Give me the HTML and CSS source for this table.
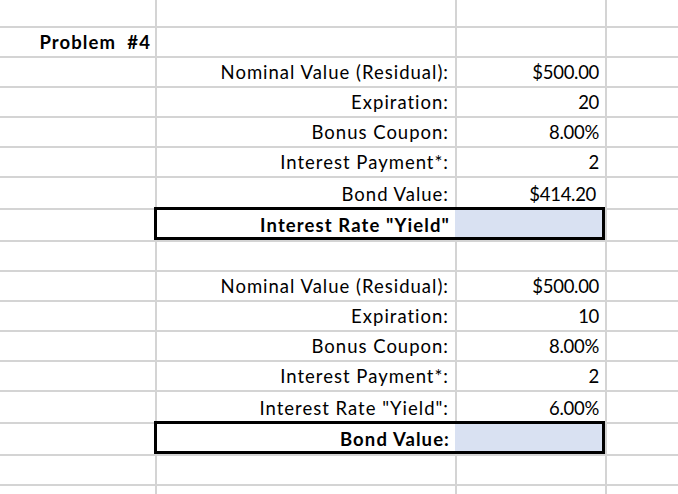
FILE: index.html
```html
<!DOCTYPE html>
<html>
<head>
<meta charset="utf-8">
<link rel="stylesheet" href="styles.css">
</head>
<body>
<div class="sheet">
  <!-- row 1 -->
  <div class="c"></div><div class="c"></div><div class="c"></div><div class="c"></div>
  <!-- row 2 -->
  <div class="c b">Problem&nbsp;&nbsp;#4</div><div class="c"></div><div class="c"></div><div class="c"></div>
  <!-- row 3 -->
  <div class="c"></div><div class="c">Nominal Value (Residual):</div><div class="c v">$500.00</div><div class="c"></div>
  <!-- row 4 -->
  <div class="c"></div><div class="c">Expiration:</div><div class="c v">20</div><div class="c"></div>
  <!-- row 5 -->
  <div class="c"></div><div class="c">Bonus Coupon:</div><div class="c v">8.00%</div><div class="c"></div>
  <!-- row 6 -->
  <div class="c"></div><div class="c">Interest Payment*:</div><div class="c v">2</div><div class="c"></div>
  <!-- row 7 -->
  <div class="c"></div><div class="c">Bond Value:</div><div class="c v acc">$414.20</div><div class="c"></div>
  <!-- row 8 -->
  <div class="c"></div>
  <div class="box"><div class="c b">Interest Rate "Yield"</div><div class="fill"></div></div>
  <div class="c"></div>
  <!-- row 9 -->
  <div class="c"></div><div class="c"></div><div class="c"></div><div class="c"></div>
  <!-- row 10 -->
  <div class="c"></div><div class="c">Nominal Value (Residual):</div><div class="c v">$500.00</div><div class="c"></div>
  <!-- row 11 -->
  <div class="c"></div><div class="c">Expiration:</div><div class="c v">10</div><div class="c"></div>
  <!-- row 12 -->
  <div class="c"></div><div class="c">Bonus Coupon:</div><div class="c v">8.00%</div><div class="c"></div>
  <!-- row 13 -->
  <div class="c"></div><div class="c">Interest Payment*:</div><div class="c v">2</div><div class="c"></div>
  <!-- row 14 -->
  <div class="c"></div><div class="c">Interest Rate "Yield":</div><div class="c v">6.00%</div><div class="c"></div>
  <!-- row 15 -->
  <div class="c"></div>
  <div class="box"><div class="c b">Bond Value:</div><div class="fill"></div></div>
  <div class="c"></div>
  <!-- row 16 -->
  <div class="c"></div><div class="c"></div><div class="c"></div><div class="c"></div>
  <!-- row 17 -->
  <div class="c"></div><div class="c"></div><div class="c"></div><div class="c"></div>
</div>
</body>
</html>
```
FILE: styles.css
```css
html, body {
  margin: 0;
  padding: 0;
  background: #ffffff;
  overflow: hidden;
}
.sheet {
  width: 678px;
  height: 494px;
  display: grid;
  grid-template-columns: 155px 298px 148px 1fr;
  grid-template-rows: 26px 28px 28px 28px 28px 28px 30px 30px 28px 28px 28px 28px 28px 30px 30px 28px 1fr;
  gap: 2px;
  background: #d4d4d4;
  font-family: Lato, "Open Sans", sans-serif;
  font-size: 18.5px;
  letter-spacing: 1px;
  color: #000;
}
.c {
  background: #fff;
  display: flex;
  align-items: flex-end;
  justify-content: flex-end;
  padding: 0 6px 3px 0;
  line-height: 21px;
  white-space: nowrap;
  overflow: hidden;
}
.b {
  font-weight: 700;
  letter-spacing: 1.1px;
}
.sheet > .b {
  padding-right: 4px;
}
.v {
  padding-right: 6px;
  letter-spacing: -0.3px;
}
.acc {
  padding-right: 9px;
}
.box {
  grid-column: 2 / 4;
  margin: -3px 0 0 -3px;
  border: 3px solid #000;
  display: grid;
  grid-template-columns: 298px 1fr;
  background: #fff;
}
.box .c {
  padding-right: 5px;
  padding-bottom: 1px;
}
.fill {
  background: #d9e1f2;
}
```
